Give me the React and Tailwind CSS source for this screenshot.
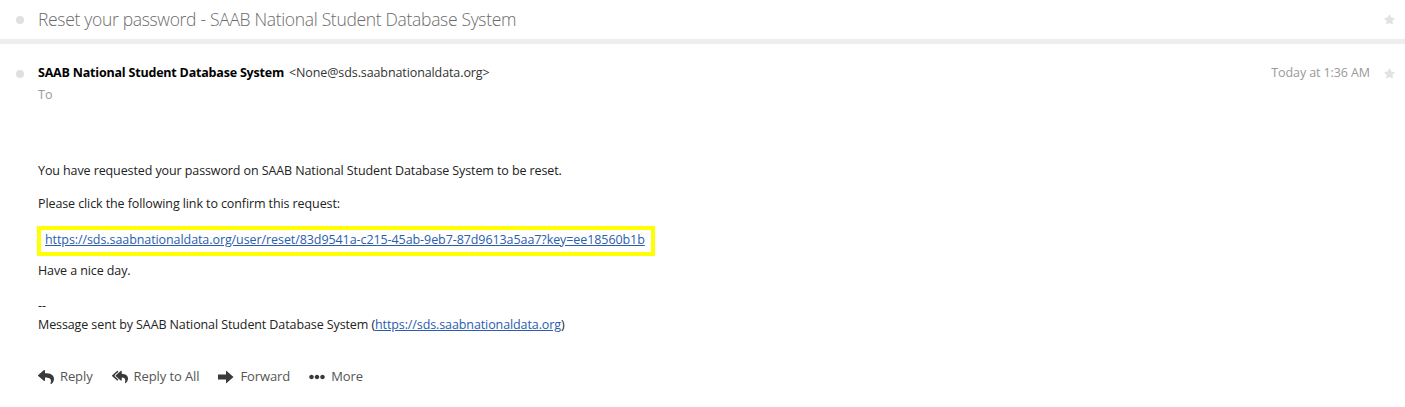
import React from "react";
import { FaReply, FaReplyAll, FaEllipsisH, FaStar } from "react-icons/fa";

const Dot = () => <span className="block w-[8px] h-[8px] rounded-full bg-[#e0e0e0]" />;

const ForwardIcon = () => (
  <svg width="16" height="14" viewBox="0 0 16 14" fill="#3a3a3a">
    <rect x="0" y="4.5" width="9" height="5" />
    <polygon points="8,0.5 15.5,7 8,13.5" />
  </svg>
);

const ActionButton = ({ icon, label }) => (
  <button className="flex items-center gap-[6px] text-[#555] text-[13px] tracking-[-0.1px]">
    <span className="text-[#3a3a3a] text-[16px] flex items-center">{icon}</span>
    <span>{label}</span>
  </button>
);

const App = () => {
  const font = { fontFamily: '"Open Sans", "Noto Sans", sans-serif' };
  return (
    <div className="w-[1405px] h-[407px] bg-white overflow-hidden" style={font}>
      {/* subject */}
      <div className="h-[44px] flex items-center pl-[16px] pr-[10px] border-b-[5px] border-[#eeeef1]">
        <Dot />
        <h1 className="ml-[14px] text-[17.5px] font-light text-[#6b6b6b] tracking-[-0.32px]">
          Reset your password - SAAB National Student Database System
        </h1>
        <FaStar className="ml-auto text-[#e2e2e2] text-[11px]" />
      </div>

      {/* sender */}
      <div className="pl-[16px] pr-[10px] pt-[21px]">
        <div className="flex items-center h-[17px]">
          <Dot />
          <span className="ml-[14px] text-[12.5px] font-bold text-black tracking-[-0.2px]">
            SAAB National Student Database System
          </span>
          <span className="ml-[5px] text-[12.5px] text-[#333] tracking-[-0.1px]">
            &lt;None@sds.saabnationaldata.org&gt;
          </span>
          <span className="ml-auto text-[12.5px] text-[#999] tracking-[-0.1px]">Today at 1:36 AM</span>
          <FaStar className="ml-[14px] text-[#e2e2e2] text-[11px]" />
        </div>
        <div className="ml-[22px] mt-[4px] text-[12.5px] text-[#999]">To</div>
      </div>

      {/* body */}
      <div className="pl-[38px] pt-[57px] text-[12.5px] text-[#222] tracking-[-0.1px] leading-[18px]">
        <p>You have requested your password on SAAB National Student Database System to be reset.</p>
        <p className="mt-[15px]">Please click the following link to confirm this request:</p>
        <div className="mt-[13px] ml-[-1px] inline-block border-[4px] border-[#ffff00] pl-[4px] pr-[6px] pt-[1px] pb-[3px]">
          <a href="#" className="text-[#2a5db0] underline tracking-[-0.08px]">
            https://sds.saabnationaldata.org/user/reset/83d9541a-c215-45ab-9eb7-87d9613a5aa7?key=ee18560b1b
          </a>
        </div>
        <p className="mt-[6px]">Have a nice day.</p>
        <p className="mt-[17px]">--</p>
        <p className="mt-[1px]">
          Message sent by SAAB National Student Database System (
          <a href="#" className="text-[#2a5db0] underline">https://sds.saabnationaldata.org</a>)
        </p>
      </div>

      {/* actions */}
      <div className="pl-[38px] mt-[33px] flex items-center gap-[19px]">
        <ActionButton icon={<FaReply />} label="Reply" />
        <ActionButton icon={<FaReplyAll />} label="Reply to All" />
        <ActionButton icon={<ForwardIcon />} label="Forward" />
        <ActionButton icon={<FaEllipsisH />} label="More" />
      </div>
    </div>
  );
};

export default App;
